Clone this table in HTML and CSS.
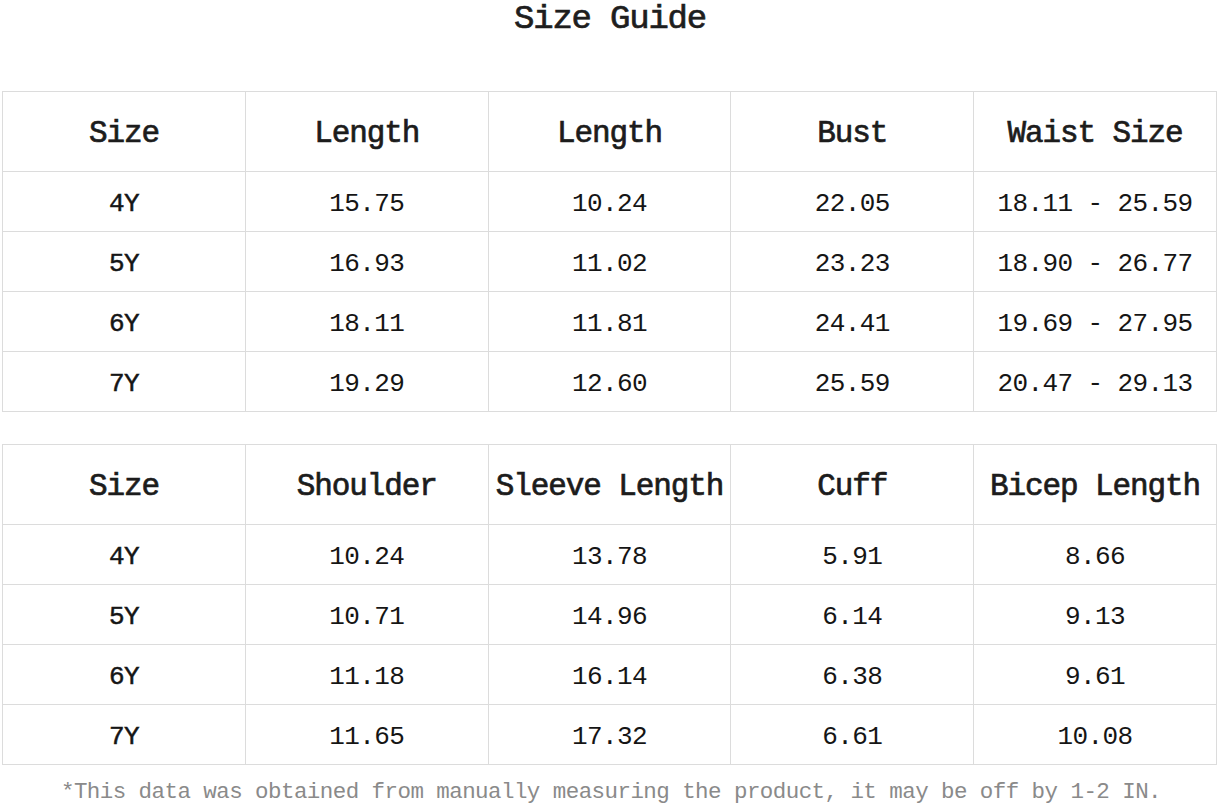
FILE: index.html
```html
<!DOCTYPE html>
<html>
<head>
<meta charset="utf-8">
<link rel="stylesheet" href="styles.css">
</head>
<body>
<div class="page">
  <h1 class="title">Size Guide</h1>
  <table class="chart first">
    <tr class="head"><th>Size</th><th>Length</th><th>Length</th><th>Bust</th><th>Waist Size</th></tr>
    <tr><th>4Y</th><td>15.75</td><td>10.24</td><td>22.05</td><td>18.11 - 25.59</td></tr>
    <tr><th>5Y</th><td>16.93</td><td>11.02</td><td>23.23</td><td>18.90 - 26.77</td></tr>
    <tr><th>6Y</th><td>18.11</td><td>11.81</td><td>24.41</td><td>19.69 - 27.95</td></tr>
    <tr><th>7Y</th><td>19.29</td><td>12.60</td><td>25.59</td><td>20.47 - 29.13</td></tr>
  </table>
  <table class="chart second">
    <tr class="head"><th>Size</th><th>Shoulder</th><th>Sleeve Length</th><th>Cuff</th><th>Bicep Length</th></tr>
    <tr><th>4Y</th><td>10.24</td><td>13.78</td><td>5.91</td><td>8.66</td></tr>
    <tr><th>5Y</th><td>10.71</td><td>14.96</td><td>6.14</td><td>9.13</td></tr>
    <tr><th>6Y</th><td>11.18</td><td>16.14</td><td>6.38</td><td>9.61</td></tr>
    <tr><th>7Y</th><td>11.65</td><td>17.32</td><td>6.61</td><td>10.08</td></tr>
  </table>
  <p class="note">*This data was obtained from manually measuring the product, it may be off by 1-2 IN.</p>
</div>
</body>
</html>
```
FILE: styles.css
```css
html, body {
  margin: 0;
  padding: 0;
  background: #fff;
}
body {
  font-family: "Liberation Mono", "DejaVu Sans Mono", monospace;
  color: #1a1a1a;
}
.page {
  width: 1220px;
  height: 805px;
  overflow: hidden;
  padding-left: 2px;
  box-sizing: border-box;
}
.title {
  margin: 0;
  height: 38px;
  line-height: 38px;
  text-align: center;
  font-size: 34px;
  letter-spacing: -1.2px;
  font-weight: normal;
  -webkit-text-stroke: 0.7px #1e1e1e;
  color: #1e1e1e;
  padding-right: 2px;
}
.chart {
  border-collapse: collapse;
  table-layout: fixed;
  width: 1215px;
}
.chart.first {
  margin-top: 53px;
}
.chart.second {
  margin-top: 32px;
}
.chart th, .chart td {
  border: 1px solid #dcdcdc;
  padding: 4px 0 0 0;
  text-align: center;
  height: 55px;
  font-size: 26px;
  letter-spacing: -0.6px;
  font-weight: normal;
  color: #151515;
}
.chart tr > th:first-child {
  -webkit-text-stroke: 0.5px #1a1a1a;
}
.chart tr.head th {
  height: 75px;
  font-size: 31px;
  letter-spacing: -1.1px;
  font-weight: normal;
  color: #1c1c1c;
  -webkit-text-stroke: 0.7px #1c1c1c;
}
.note {
  margin: 13px 0 0 0;
  text-align: center;
  font-size: 22.5px;
  letter-spacing: -0.56px;
  color: #8a8a8a;
  line-height: 28px;
}
```
